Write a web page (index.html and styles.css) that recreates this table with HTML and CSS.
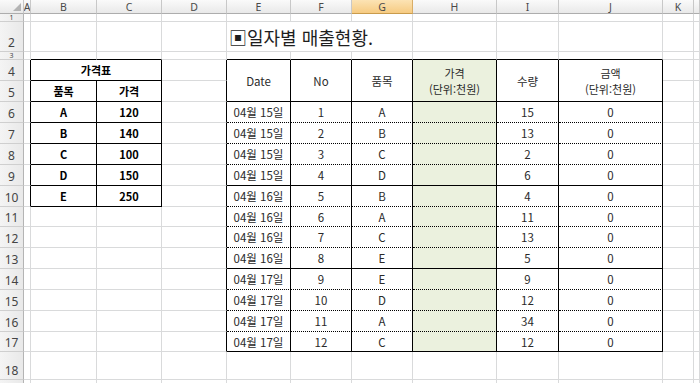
FILE: index.html
```html
<!DOCTYPE html>
<html lang="ko">
<head>
<meta charset="utf-8">
<title>일자별 매출현황</title>
<link rel="stylesheet" href="styles.css">
</head>
<body>
<div class="sheet">
  <!-- column headers -->
  <div class="ch corner"><svg width="8" height="8" viewBox="0 0 8 8"><polygon points="8,0 8,8 0,8" fill="#b4b4b4"/></svg></div>
  <div class="ch">A</div><div class="ch">B</div><div class="ch">C</div><div class="ch">D</div><div class="ch">E</div><div class="ch">F</div><div class="ch sel">G</div><div class="ch">H</div><div class="ch">I</div><div class="ch">J</div><div class="ch">K</div><div class="ch"></div>

  <!-- row 1 -->
  <div class="rh tiny">1</div>
  <div></div><div></div><div></div><div></div><div></div><div></div><div></div><div></div><div></div><div></div><div></div><div></div>

  <!-- row 2 -->
  <div class="rh">2</div>
  <div></div><div></div><div></div><div></div>
  <div class="title">▣일자별 매출현황.</div>
  <div></div><div></div><div></div><div></div><div></div>

  <!-- row 3 -->
  <div class="rh tiny">3</div>
  <div></div><div class="kb"></div><div class="kb"></div><div></div>
  <div class="kb"></div><div class="kb"></div><div class="kb"></div><div class="kb"></div><div class="kb"></div><div class="kb"></div>
  <div></div><div></div>

  <!-- row 4 -->
  <div class="rh">4</div>
  <div class="kr"></div>
  <div class="t b c2">가격표</div>
  <div class="kr"></div>
  <div class="t r2">Date</div>
  <div class="t r2">No</div>
  <div class="t r2">품목</div>
  <div class="t r2 g two"><span>가격</span><span>(단위:천원)</span></div>
  <div class="t r2">수량</div>
  <div class="t r2 two"><span>금액</span><span>(단위:천원)</span></div>
  <div></div><div></div>

  <!-- row 5 -->
  <div class="rh">5</div>
  <div class="kr"></div>
  <div class="t b">품목</div><div class="t b">가격</div>
  <div class="kr"></div>
  <div></div><div></div>

  <!-- row 6 -->
  <div class="rh">6</div>
  <div class="kr"></div><div class="t b">A</div><div class="t b">120</div><div class="kr"></div>
  <div class="d">04월 15일</div><div class="d">1</div><div class="d">A</div><div class="d g"></div><div class="d">15</div><div class="d">0</div>
  <div></div><div></div>

  <!-- row 7 -->
  <div class="rh">7</div>
  <div class="kr"></div><div class="t b">B</div><div class="t b">140</div><div class="kr"></div>
  <div class="d">04월 15일</div><div class="d">2</div><div class="d">B</div><div class="d g"></div><div class="d">13</div><div class="d">0</div>
  <div></div><div></div>

  <!-- row 8 -->
  <div class="rh">8</div>
  <div class="kr"></div><div class="t b">C</div><div class="t b">100</div><div class="kr"></div>
  <div class="d">04월 15일</div><div class="d">3</div><div class="d">C</div><div class="d g"></div><div class="d">2</div><div class="d">0</div>
  <div></div><div></div>

  <!-- row 9 -->
  <div class="rh">9</div>
  <div class="kr"></div><div class="t b">D</div><div class="t b">150</div><div class="kr"></div>
  <div class="t">04월 15일</div><div class="t">4</div><div class="t">D</div><div class="t g"></div><div class="t">6</div><div class="t">0</div>
  <div></div><div></div>

  <!-- row 10 -->
  <div class="rh">10</div>
  <div class="kr"></div><div class="t b">E</div><div class="t b">250</div><div class="kr"></div>
  <div class="d">04월 16일</div><div class="d">5</div><div class="d">B</div><div class="d g"></div><div class="d">4</div><div class="d">0</div>
  <div></div><div></div>

  <!-- row 11 -->
  <div class="rh">11</div>
  <div></div><div></div><div></div><div class="kr"></div>
  <div class="d">04월 16일</div><div class="d">6</div><div class="d">A</div><div class="d g"></div><div class="d">11</div><div class="d">0</div>
  <div></div><div></div>

  <!-- row 12 -->
  <div class="rh">12</div>
  <div></div><div></div><div></div><div class="kr"></div>
  <div class="d">04월 16일</div><div class="d">7</div><div class="d">C</div><div class="d g"></div><div class="d">13</div><div class="d">0</div>
  <div></div><div></div>

  <!-- row 13 -->
  <div class="rh">13</div>
  <div></div><div></div><div></div><div class="kr"></div>
  <div class="t">04월 16일</div><div class="t">8</div><div class="t">E</div><div class="t g"></div><div class="t">5</div><div class="t">0</div>
  <div></div><div></div>

  <!-- row 14 -->
  <div class="rh">14</div>
  <div></div><div></div><div></div><div class="kr"></div>
  <div class="d">04월 17일</div><div class="d">9</div><div class="d">E</div><div class="d g"></div><div class="d">9</div><div class="d">0</div>
  <div></div><div></div>

  <!-- row 15 -->
  <div class="rh">15</div>
  <div></div><div></div><div></div><div class="kr"></div>
  <div class="d">04월 17일</div><div class="d">10</div><div class="d">D</div><div class="d g"></div><div class="d">12</div><div class="d">0</div>
  <div></div><div></div>

  <!-- row 16 -->
  <div class="rh">16</div>
  <div></div><div></div><div></div><div class="kr"></div>
  <div class="d">04월 17일</div><div class="d">11</div><div class="d">A</div><div class="d g"></div><div class="d">34</div><div class="d">0</div>
  <div></div><div></div>

  <!-- row 17 -->
  <div class="rh">17</div>
  <div></div><div></div><div></div><div class="kr"></div>
  <div class="t">04월 17일</div><div class="t">12</div><div class="t">C</div><div class="t g"></div><div class="t">12</div><div class="t">0</div>
  <div></div><div></div>

  <!-- row 18 -->
  <div class="rh">18</div>
  <div></div><div></div><div></div><div></div><div></div><div></div><div></div><div></div><div></div><div></div><div></div><div></div>

  <!-- row 19 -->
  <div class="rh"></div>
  <div></div><div></div><div></div><div></div><div></div><div></div><div></div><div></div><div></div><div></div><div></div><div></div>
</div>
</body>
</html>
```

FILE: styles.css
```css
* { box-sizing: border-box; }
html, body {
  margin: 0;
  padding: 0;
  background: #fff;
  overflow: hidden;
}
body {
  font-family: "Noto Sans CJK KR", "Noto Sans", sans-serif;
  font-size: 11.5px;
  color: #2a2a2a;
}
.sheet {
  display: grid;
  width: 700px;
  height: 383px;
  overflow: hidden;
  grid-template-columns: 24px 7px 66px 65px 65px 64px 61px 61px 84px 62px 104px 31px 6px;
  grid-template-rows: 14px 8px 30px 8px repeat(7, 21px) 20px repeat(5, 21px) 20px 28px 20px;
}
.sheet > * {
  border-right: 1px solid #d9dadb;
  border-bottom: 1px solid #d9dadb;
  display: flex;
  align-items: center;
  justify-content: center;
  overflow: hidden;
  white-space: nowrap;
  line-height: 14px;
}
.ch {
  background: linear-gradient(#fafafa, #e9e9e9);
  border-right-color: #c8c8c8;
  border-bottom-color: #adadad;
  color: #4a4a4a;
  font-family: "Noto Sans", sans-serif;
  font-size: 10.5px;
}
.sel {
  background: linear-gradient(#fce3b4, #f6cb82);
  border-right-color: #d9ad66;
  border-bottom-color: #c99b4c;
}
.corner {
  justify-content: flex-end;
  align-items: flex-end;
  padding: 0 2px 2px 0;
}
.rh {
  background: linear-gradient(90deg, #f4f4f4, #e9e9e9);
  border-right-color: #b4b4b4;
  border-bottom-color: #cfcfcf;
  color: #444;
  font-family: "Noto Sans", sans-serif;
  font-size: 12px;
  align-items: flex-end;
  padding-bottom: 2px;
  line-height: 13px;
}
.tiny {
  font-size: 7px;
  line-height: 7px;
  padding-bottom: 0;
}
.title {
  grid-column: span 3;
  justify-content: flex-start;
  align-items: flex-end;
  padding: 0 0 2px 2px;
  font-size: 18px;
  line-height: 24px;
  color: #1e1e1e;
}
.kr { border-right-color: #000; }
.kb { border-bottom-color: #000; }
.t {
  border-right-color: #000;
  border-bottom-color: #000;
}
.d {
  border-right-color: #000;
  border-bottom: 1px dotted #000;
}
.g { background: #ebf1de; }
.b { font-weight: bold; color: #000; font-size: 11px; }
.c2 { grid-column: span 2; }
.r2 { grid-row: span 2; }
.two {
  flex-direction: column;
  line-height: 16px;
  font-size: 11px;
}
```
